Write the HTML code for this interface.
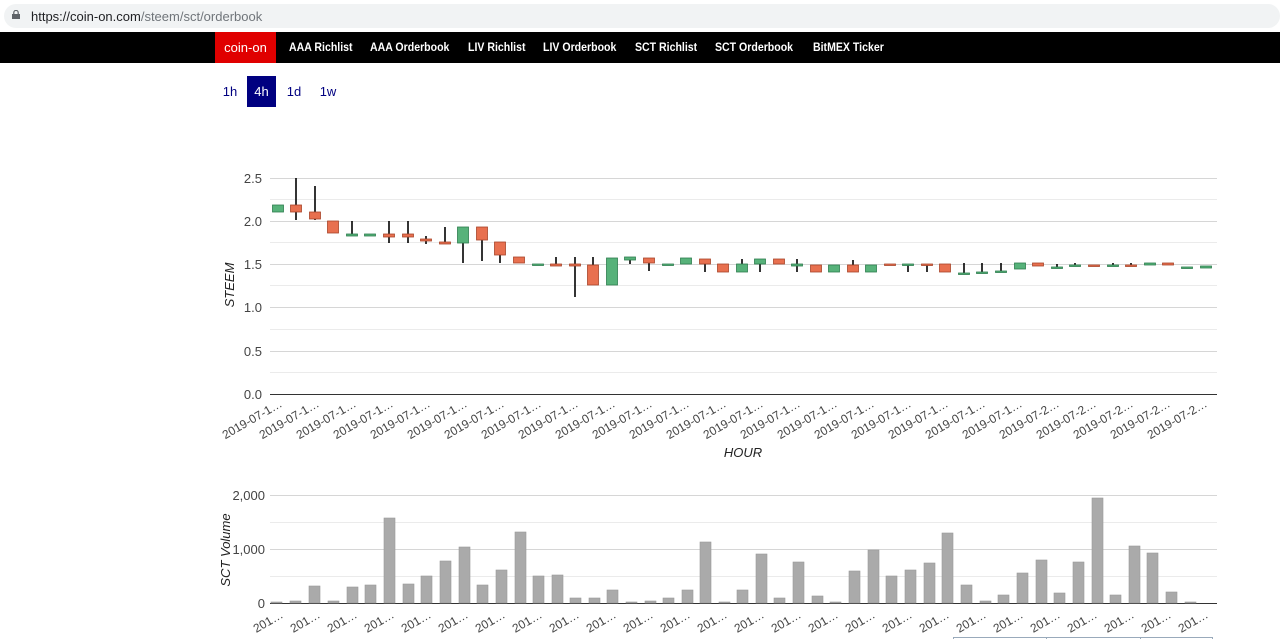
<!DOCTYPE html>
<html><head><meta charset="utf-8"><style>
*{margin:0;padding:0;box-sizing:border-box}
body{width:1280px;height:639px;overflow:hidden;background:#fff;font-family:"Liberation Sans",Arial,sans-serif;position:relative}
.addr{position:absolute;left:0;top:0;width:1280px;height:32px;background:#fff}
.field{position:absolute;left:4px;top:4px;width:1276px;height:24px;background:#f1f3f4;border-radius:12px}
.url{position:absolute;left:31px;top:9px;font-size:13px;color:#202124}
.url span{color:#70757a}
.lock{position:absolute;left:12px;top:10px;width:8px;height:9px}
.nav{position:absolute;left:0;top:32px;width:1280px;height:31px;background:#000}
.nav a{position:absolute;top:0;height:31px;line-height:31px;color:#fff;font-size:12px;font-weight:bold;text-decoration:none;transform:scaleX(0.88);transform-origin:left center;white-space:nowrap}
.nav a.brand{background:#e00000;width:61px;text-align:center;font-weight:normal;font-size:13px;transform:none}
.btn{position:absolute;top:76px;height:31px;line-height:31px;font-size:13px;color:#000080;text-align:center}
svg text{font-family:"Liberation Sans",Arial,sans-serif}
</style></head><body>
<div class="addr"><div class="field"></div>
<svg class="lock" viewBox="0 0 8 9"><rect x="0" y="4" width="8" height="5" fill="#5f6368"/><path d="M1.8 4V2.6a2.2 2.2 0 0 1 4.4 0V4" fill="none" stroke="#5f6368" stroke-width="1.2"/></svg>
<div class="url">https://coin-on.com<span>/steem/sct/orderbook</span></div></div>
<div class="nav">
<a class="brand" style="left:215px">coin-on</a>
<a style="left:289px">AAA Richlist</a>
<a style="left:370px">AAA Orderbook</a>
<a style="left:468px">LIV Richlist</a>
<a style="left:543px">LIV Orderbook</a>
<a style="left:635px">SCT Richlist</a>
<a style="left:715px">SCT Orderbook</a>
<a style="left:813px">BitMEX Ticker</a>
</div>
<div class="btn" style="left:216px;width:28px">1h</div>
<div class="btn" style="left:247px;width:29px;background:#000080;color:#fff">4h</div>
<div class="btn" style="left:280px;width:28px">1d</div>
<div class="btn" style="left:314px;width:28px">1w</div>

<svg width="1280" height="639" style="position:absolute;left:0;top:0" xmlns="http://www.w3.org/2000/svg">
<g stroke="#ebebeb" stroke-width="1">
<line x1="270" x2="1217" y1="199.5" y2="199.5"/><line x1="270" x2="1217" y1="242.5" y2="242.5"/><line x1="270" x2="1217" y1="285.5" y2="285.5"/><line x1="270" x2="1217" y1="329.5" y2="329.5"/><line x1="270" x2="1217" y1="372.5" y2="372.5"/>
<line x1="270" x2="1217" y1="522.5" y2="522.5"/><line x1="270" x2="1217" y1="576.5" y2="576.5"/>
</g>
<g stroke="#d6d6d6" stroke-width="1">
<line x1="270" x2="1217" y1="178.5" y2="178.5"/><line x1="270" x2="1217" y1="221.5" y2="221.5"/><line x1="270" x2="1217" y1="264.5" y2="264.5"/><line x1="270" x2="1217" y1="307.5" y2="307.5"/><line x1="270" x2="1217" y1="351.5" y2="351.5"/>
<line x1="270" x2="1217" y1="495.5" y2="495.5"/><line x1="270" x2="1217" y1="549.5" y2="549.5"/>
</g>
<line x1="270" x2="1217" y1="394.5" y2="394.5" stroke="#333"/>
<line x1="270" x2="1217" y1="603.5" y2="603.5" stroke="#333"/>
<g font-size="13" fill="#444" text-anchor="end">
<text x="262" y="183">2.5</text><text x="262" y="226">2.0</text><text x="262" y="269">1.5</text><text x="262" y="312">1.0</text><text x="262" y="356">0.5</text><text x="262" y="399">0.0</text>
<text x="265" y="500">2,000</text><text x="265" y="554">1,000</text><text x="265" y="608">0</text>
</g>
<text transform="translate(234,285) rotate(-90)" text-anchor="middle" font-size="13" font-style="italic" fill="#222">STEEM</text>
<text x="743" y="457" text-anchor="middle" font-size="13" font-style="italic" fill="#222">HOUR</text>
<text transform="translate(230,550) rotate(-90)" text-anchor="middle" font-size="13" font-style="italic" fill="#222">SCT Volume</text>

<g stroke="#000" stroke-width="1.6">
<line x1="296" x2="296" y1="178" y2="220"/><line x1="315" x2="315" y1="186" y2="220"/>
<line x1="352" x2="352" y1="221" y2="236"/><line x1="389" x2="389" y1="221" y2="243"/><line x1="408" x2="408" y1="221" y2="243"/><line x1="426" x2="426" y1="236" y2="244"/><line x1="445" x2="445" y1="227" y2="244"/><line x1="463" x2="463" y1="227" y2="263"/><line x1="482" x2="482" y1="227" y2="261"/><line x1="500" x2="500" y1="242" y2="263"/>
<line x1="556" x2="556" y1="257" y2="266"/><line x1="575" x2="575" y1="257" y2="297"/><line x1="593" x2="593" y1="257" y2="285"/><line x1="630" x2="630" y1="257" y2="264"/><line x1="649" x2="649" y1="258" y2="271"/>
<line x1="705" x2="705" y1="259" y2="272"/><line x1="742" x2="742" y1="259" y2="272"/><line x1="760" x2="760" y1="259" y2="272"/><line x1="797" x2="797" y1="259" y2="272"/><line x1="853" x2="853" y1="260" y2="272"/>
<line x1="908" x2="908" y1="264" y2="272"/><line x1="927" x2="927" y1="264" y2="272"/><line x1="964" x2="964" y1="263" y2="274"/><line x1="982" x2="982" y1="263" y2="273"/><line x1="1001" x2="1001" y1="263" y2="272"/>
<line x1="1057" x2="1057" y1="264" y2="268"/><line x1="1075" x2="1075" y1="263" y2="266"/><line x1="1113" x2="1113" y1="263" y2="266"/><line x1="1131" x2="1131" y1="263" y2="266"/>
</g>
<g stroke-width="0.8">
<g fill="#57b27a" stroke="#2e7d4f">
<rect x="272.5" y="205" width="11" height="7"/><rect x="346.5" y="234" width="11" height="2"/><rect x="364.5" y="234" width="11" height="2"/><rect x="457.5" y="227" width="11" height="16"/><rect x="532.5" y="264" width="11" height="1.5"/><rect x="606.5" y="258" width="11" height="27"/><rect x="624.5" y="257" width="11" height="3"/><rect x="662.5" y="264" width="11" height="1.5"/><rect x="680.5" y="258" width="11" height="6"/><rect x="736.5" y="264" width="11" height="8"/><rect x="754.5" y="259" width="11" height="5"/><rect x="791.5" y="264" width="11" height="2"/><rect x="828.5" y="265" width="11" height="7"/><rect x="865.5" y="265" width="11" height="7"/><rect x="902.5" y="264" width="11" height="1.5"/><rect x="958.5" y="273" width="11" height="1.5"/><rect x="976.5" y="272" width="11" height="1.5"/><rect x="995.5" y="271" width="11" height="1.5"/><rect x="1014.5" y="263" width="11" height="6"/><rect x="1051.5" y="267" width="11" height="1.5"/><rect x="1069.5" y="265" width="11" height="1.5"/><rect x="1107.5" y="265" width="11" height="1.5"/><rect x="1144.5" y="263" width="11" height="2"/><rect x="1181.5" y="267" width="11" height="1.5"/><rect x="1200.5" y="266" width="11" height="2"/>
</g>
<g fill="#e8704f" stroke="#a8452a">
<rect x="290.5" y="205" width="11" height="7"/><rect x="309.5" y="212" width="11" height="7"/><rect x="327.5" y="221" width="11" height="12"/><rect x="383.5" y="234" width="11" height="3"/><rect x="402.5" y="234" width="11" height="3"/><rect x="420.5" y="239" width="11" height="2"/><rect x="439.5" y="242" width="11" height="2"/><rect x="476.5" y="227" width="11" height="13"/><rect x="494.5" y="242" width="11" height="13"/><rect x="513.5" y="257" width="11" height="6"/><rect x="550.5" y="264" width="11" height="2"/><rect x="569.5" y="264" width="11" height="2"/><rect x="587.5" y="265" width="11" height="20"/><rect x="643.5" y="258" width="11" height="5"/><rect x="699.5" y="259" width="11" height="5"/><rect x="717.5" y="264" width="11" height="8"/><rect x="773.5" y="259" width="11" height="5"/><rect x="810.5" y="265" width="11" height="7"/><rect x="847.5" y="265" width="11" height="7"/><rect x="884.5" y="264" width="11" height="1.5"/><rect x="921.5" y="264" width="11" height="1.5"/><rect x="939.5" y="264" width="11" height="8"/><rect x="1032.5" y="263" width="11" height="3"/><rect x="1088.5" y="265" width="11" height="1.5"/><rect x="1125.5" y="265" width="11" height="1.5"/><rect x="1162.5" y="263" width="11" height="2"/>
</g></g>

<g fill="#aaa" stroke="#999" stroke-width="0.6">
<rect x="271" y="602" width="11" height="1"/><rect x="290" y="601" width="11" height="2"/><rect x="309" y="586" width="11" height="17"/><rect x="328" y="601" width="11" height="2"/><rect x="347" y="587" width="11" height="16"/><rect x="365" y="585" width="11" height="18"/><rect x="384" y="518" width="11" height="85"/><rect x="403" y="584" width="11" height="19"/><rect x="421" y="576" width="11" height="27"/><rect x="440" y="561" width="11" height="42"/><rect x="459" y="547" width="11" height="56"/><rect x="477" y="585" width="11" height="18"/><rect x="496" y="570" width="11" height="33"/><rect x="515" y="532" width="11" height="71"/><rect x="533" y="576" width="11" height="27"/><rect x="552" y="575" width="11" height="28"/><rect x="570" y="598" width="11" height="5"/><rect x="589" y="598" width="11" height="5"/><rect x="607" y="590" width="11" height="13"/><rect x="626" y="602" width="11" height="1"/><rect x="645" y="601" width="11" height="2"/><rect x="663" y="598" width="11" height="5"/><rect x="682" y="590" width="11" height="13"/><rect x="700" y="542" width="11" height="61"/><rect x="719" y="602" width="11" height="1"/><rect x="737" y="590" width="11" height="13"/><rect x="756" y="554" width="11" height="49"/><rect x="774" y="598" width="11" height="5"/><rect x="793" y="562" width="11" height="41"/><rect x="812" y="596" width="11" height="7"/><rect x="830" y="602" width="11" height="1"/><rect x="849" y="571" width="11" height="32"/><rect x="868" y="550" width="11" height="53"/><rect x="886" y="576" width="11" height="27"/><rect x="905" y="570" width="11" height="33"/><rect x="924" y="563" width="11" height="40"/><rect x="942" y="533" width="11" height="70"/><rect x="961" y="585" width="11" height="18"/><rect x="980" y="601" width="11" height="2"/><rect x="998" y="595" width="11" height="8"/><rect x="1017" y="573" width="11" height="30"/><rect x="1036" y="560" width="11" height="43"/><rect x="1054" y="593" width="11" height="10"/><rect x="1073" y="562" width="11" height="41"/><rect x="1092" y="498" width="11" height="105"/><rect x="1110" y="595" width="11" height="8"/><rect x="1129" y="546" width="11" height="57"/><rect x="1147" y="553" width="11" height="50"/><rect x="1166" y="592" width="11" height="11"/><rect x="1185" y="602" width="11" height="1"/>
</g>

<g font-size="12" fill="#444" text-anchor="end">
<g transform="translate(283,406) rotate(-30)"><text>2019-07-1…</text></g><g transform="translate(320,406) rotate(-30)"><text>2019-07-1…</text></g><g transform="translate(357,406) rotate(-30)"><text>2019-07-1…</text></g><g transform="translate(394,406) rotate(-30)"><text>2019-07-1…</text></g><g transform="translate(431,406) rotate(-30)"><text>2019-07-1…</text></g><g transform="translate(468,406) rotate(-30)"><text>2019-07-1…</text></g><g transform="translate(505,406) rotate(-30)"><text>2019-07-1…</text></g><g transform="translate(542,406) rotate(-30)"><text>2019-07-1…</text></g><g transform="translate(579,406) rotate(-30)"><text>2019-07-1…</text></g><g transform="translate(616,406) rotate(-30)"><text>2019-07-1…</text></g><g transform="translate(653,406) rotate(-30)"><text>2019-07-1…</text></g><g transform="translate(690,406) rotate(-30)"><text>2019-07-1…</text></g><g transform="translate(727,406) rotate(-30)"><text>2019-07-1…</text></g><g transform="translate(764,406) rotate(-30)"><text>2019-07-1…</text></g><g transform="translate(801,406) rotate(-30)"><text>2019-07-1…</text></g><g transform="translate(838,406) rotate(-30)"><text>2019-07-1…</text></g><g transform="translate(875,406) rotate(-30)"><text>2019-07-1…</text></g><g transform="translate(912,406) rotate(-30)"><text>2019-07-1…</text></g><g transform="translate(949,406) rotate(-30)"><text>2019-07-1…</text></g><g transform="translate(986,406) rotate(-30)"><text>2019-07-1…</text></g><g transform="translate(1023,406) rotate(-30)"><text>2019-07-1…</text></g><g transform="translate(1060,406) rotate(-30)"><text>2019-07-2…</text></g><g transform="translate(1097,406) rotate(-30)"><text>2019-07-2…</text></g><g transform="translate(1134,406) rotate(-30)"><text>2019-07-2…</text></g><g transform="translate(1171,406) rotate(-30)"><text>2019-07-2…</text></g><g transform="translate(1208,406) rotate(-30)"><text>2019-07-2…</text></g>
</g>
<g font-size="12" fill="#444" text-anchor="end">
<g transform="translate(284,617) rotate(-30)"><text>201…</text></g><g transform="translate(321,617) rotate(-30)"><text>201…</text></g><g transform="translate(358,617) rotate(-30)"><text>201…</text></g><g transform="translate(395,617) rotate(-30)"><text>201…</text></g><g transform="translate(432,617) rotate(-30)"><text>201…</text></g><g transform="translate(469,617) rotate(-30)"><text>201…</text></g><g transform="translate(506,617) rotate(-30)"><text>201…</text></g><g transform="translate(543,617) rotate(-30)"><text>201…</text></g><g transform="translate(580,617) rotate(-30)"><text>201…</text></g><g transform="translate(617,617) rotate(-30)"><text>201…</text></g><g transform="translate(654,617) rotate(-30)"><text>201…</text></g><g transform="translate(691,617) rotate(-30)"><text>201…</text></g><g transform="translate(728,617) rotate(-30)"><text>201…</text></g><g transform="translate(765,617) rotate(-30)"><text>201…</text></g><g transform="translate(802,617) rotate(-30)"><text>201…</text></g><g transform="translate(839,617) rotate(-30)"><text>201…</text></g><g transform="translate(876,617) rotate(-30)"><text>201…</text></g><g transform="translate(913,617) rotate(-30)"><text>201…</text></g><g transform="translate(950,617) rotate(-30)"><text>201…</text></g><g transform="translate(987,617) rotate(-30)"><text>201…</text></g><g transform="translate(1024,617) rotate(-30)"><text>201…</text></g><g transform="translate(1061,617) rotate(-30)"><text>201…</text></g><g transform="translate(1098,617) rotate(-30)"><text>201…</text></g><g transform="translate(1135,617) rotate(-30)"><text>201…</text></g><g transform="translate(1172,617) rotate(-30)"><text>201…</text></g><g transform="translate(1209,617) rotate(-30)"><text>201…</text></g>
</g>
<g stroke="#9ab" stroke-width="1" fill="none">
<line x1="953" x2="1213" y1="637.5" y2="637.5"/><line x1="953.5" x2="953.5" y1="637" y2="639"/><line x1="1046.5" x2="1046.5" y1="637" y2="639"/><line x1="1140.5" x2="1140.5" y1="637" y2="639"/><line x1="1212.5" x2="1212.5" y1="637" y2="639"/>
</g>
</svg>
</body></html>
